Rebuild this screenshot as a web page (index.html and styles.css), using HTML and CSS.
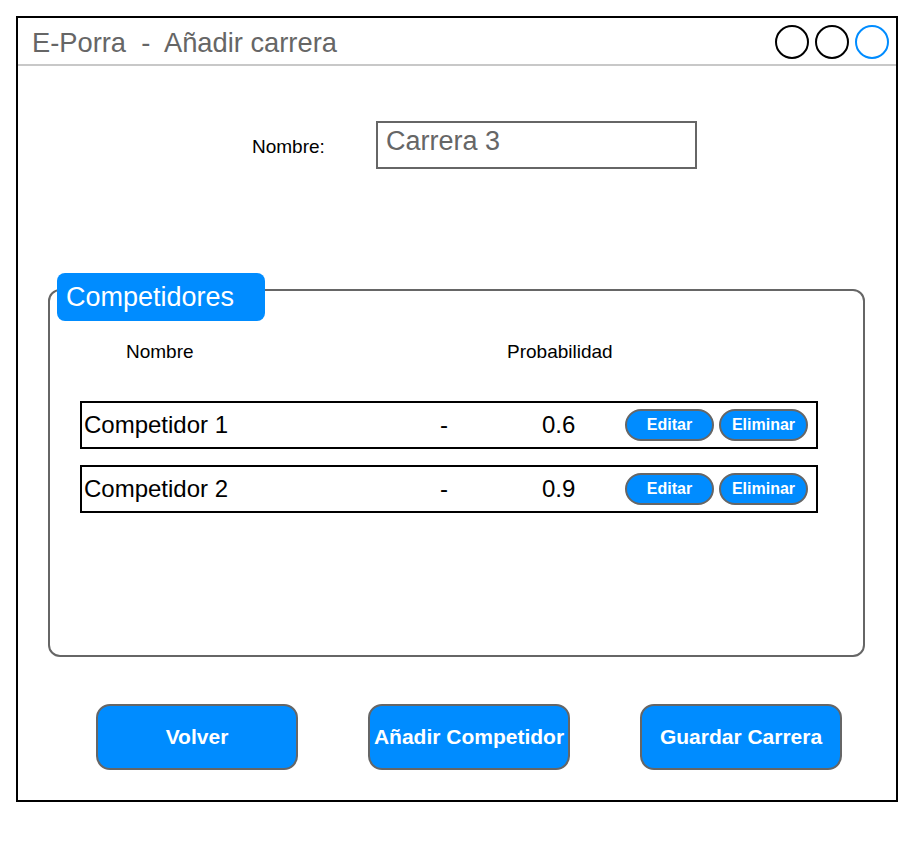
FILE: index.html
```html
<!DOCTYPE html>
<html lang="es">
<head>
<meta charset="utf-8">
<title>E-Porra - Añadir carrera</title>
<link rel="stylesheet" href="styles.css">
</head>
<body>
<div class="window">
  <div class="titlebar">
    <div class="title">E-Porra &nbsp;-&nbsp; Añadir carrera</div>
    <div class="controls">
      <span class="dot"></span>
      <span class="dot"></span>
      <span class="dot dot-blue"></span>
    </div>
  </div>
  <div class="name-row">
    <div class="name-label">Nombre:</div>
    <div class="name-input">Carrera 3</div>
  </div>
  <div class="group">
    <div class="group-tab">Competidores</div>
    <div class="col-heads">
      <span class="col-name">Nombre</span>
      <span class="col-prob">Probabilidad</span>
    </div>
    <div class="rows">
      <div class="row">
        <span class="r-name">Competidor 1</span>
        <span class="r-dash">-</span>
        <span class="r-val">0.6</span>
        <span class="pill">Editar</span>
        <span class="pill">Eliminar</span>
      </div>
      <div class="row">
        <span class="r-name">Competidor 2</span>
        <span class="r-dash">-</span>
        <span class="r-val">0.9</span>
        <span class="pill">Editar</span>
        <span class="pill">Eliminar</span>
      </div>
    </div>
  </div>
  <div class="actions">
    <div class="btn">Volver</div>
    <div class="btn">Añadir Competidor</div>
    <div class="btn">Guardar Carrera</div>
  </div>
</div>
</body>
</html>
```
FILE: styles.css
```css
html, body {
  margin: 0;
  padding: 0;
  background: #fff;
}
body {
  font-family: "Liberation Sans", Arial, sans-serif;
  color: #000;
}
.window {
  margin: 16px 0 0 16px;
  width: 882px;
  height: 786px;
  box-sizing: border-box;
  border: 2px solid #000;
  display: flex;
  flex-direction: column;
}
.titlebar {
  height: 46px;
  border-bottom: 2px solid #c8c8c8;
  display: flex;
  align-items: center;
  justify-content: space-between;
  padding: 0 7px 0 14px;
}
.title {
  font-size: 27.3px;
  color: #666;
  margin-top: 3px;
}
.controls {
  display: flex;
  gap: 6px;
  margin-top: 1px;
}
.dot {
  width: 30px;
  height: 30px;
  border: 2px solid #000;
  border-radius: 50%;
  box-sizing: content-box;
}
.dot-blue {
  border-color: #008cff;
}
.name-row {
  display: flex;
  align-items: center;
  margin-top: 55px;
  padding-left: 234px;
}
.name-label {
  width: 124px;
  font-size: 19px;
  margin-top: 4px;
}
.name-input {
  width: 321px;
  height: 48px;
  box-sizing: border-box;
  border: 2px solid #666;
  font-size: 27px;
  color: #666;
  padding: 3px 0 0 8px;
}
.group {
  position: relative;
  margin: 120px 0 0 30px;
  width: 817px;
  height: 368px;
  box-sizing: border-box;
  border: 2px solid #666;
  border-radius: 12px;
  padding-top: 51px;
}
.group-tab {
  position: absolute;
  top: -18px;
  left: 7px;
  width: 208px;
  height: 48px;
  box-sizing: border-box;
  background: #008cff;
  border-radius: 8px;
  color: #fff;
  font-size: 27px;
  padding: 9px 0 0 9px;
}
.col-heads {
  display: flex;
  height: 20px;
  align-items: center;
  font-size: 19px;
}
.col-name {
  margin-left: 76px;
  width: 381px;
}
.rows {
  margin: 39px 0 0 30px;
  width: 738px;
  display: flex;
  flex-direction: column;
  gap: 16px;
}
.row {
  height: 48px;
  box-sizing: border-box;
  border: 2px solid #000;
  display: flex;
  align-items: center;
  padding: 0 8px 0 2px;
  font-size: 24px;
}
.r-name {
  flex: 1;
}
.r-dash {
  width: 30px;
  text-align: center;
}
.r-val {
  width: 166px;
  box-sizing: border-box;
  padding-left: 83px;
}
.pill {
  width: 89px;
  height: 32px;
  box-sizing: border-box;
  border: 2px solid #666;
  border-radius: 16px;
  background: #008cff;
  color: #fff;
  font-weight: bold;
  font-size: 16px;
  display: flex;
  align-items: center;
  justify-content: center;
}
.pill + .pill {
  margin-left: 5px;
}
.actions {
  display: flex;
  gap: 70px;
  margin: 47px 0 0 78px;
}
.btn {
  width: 202px;
  height: 66px;
  box-sizing: border-box;
  border: 2px solid #666;
  border-radius: 14px;
  background: #008cff;
  color: #fff;
  font-weight: bold;
  font-size: 21px;
  display: flex;
  align-items: center;
  justify-content: center;
  white-space: nowrap;
}
```
